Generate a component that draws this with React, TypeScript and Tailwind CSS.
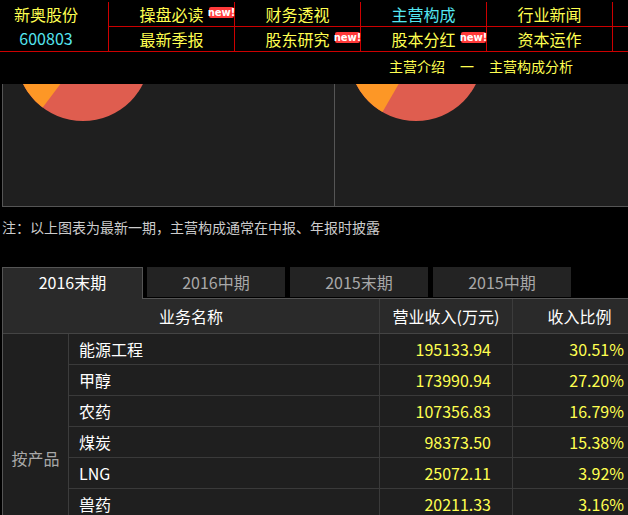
import React from "react";

type NavItem = { label: string; isNew?: boolean; active?: boolean };

const navRows: NavItem[][] = [
  [
    { label: "操盘必读", isNew: true },
    { label: "财务透视" },
    { label: "主营构成", active: true },
    { label: "行业新闻" },
  ],
  [
    { label: "最新季报" },
    { label: "股东研究", isNew: true },
    { label: "股本分红", isNew: true },
    { label: "资本运作" },
  ],
];

const tabs = ["2016末期", "2016中期", "2015末期", "2015中期"];

const rows = [
  { name: "能源工程", income: "195133.94", ratio: "30.51%" },
  { name: "甲醇", income: "173990.94", ratio: "27.20%" },
  { name: "农药", income: "107356.83", ratio: "16.79%" },
  { name: "煤炭", income: "98373.50", ratio: "15.38%" },
  { name: "LNG", income: "25072.11", ratio: "3.92%" },
  { name: "兽药", income: "20211.33", ratio: "3.16%" },
  { name: "二甲醚", income: "11236.52", ratio: "1.76%" },
  { name: "其他", income: "7235.40", ratio: "1.13%" },
];

const NewBadge: React.FC = () => (
  <span className="absolute right-0 top-[5px] flex h-[11px] w-[25px] items-center justify-center rounded-[2px] bg-[#ff3a3a] font-['DejaVu_Sans',sans-serif] text-[10px] font-bold leading-none text-white">
    new!
  </span>
);

const Pie: React.FC<{ cx: number; split: [number, number] }> = ({ cx, split }) => (
  <svg width="331" height="122" viewBox="0 0 331 122" className="block">
    <circle cx={cx} cy={-30} r={67} fill="#df5d4f" />
    <path
      d={`M ${cx} -30 L ${split[0]} ${split[1]} A 67 67 0 0 1 ${cx - 63} -53 Z`}
      fill="#fd9726"
    />
  </svg>
);

const App: React.FC = () => {
  return (
    <div className="h-[515px] w-full overflow-hidden bg-black pt-[2px] font-['Noto_Sans_CJK_SC',sans-serif]">
      {/* top nav */}
      <div className="grid grid-cols-[109px_126px_126px_126px_126px_1fr] grid-rows-[25px_25px]">
        <div className="row-span-2 flex flex-col items-center border-b border-r border-[#cc0000] pr-[16px]">
          <div className="h-[24px] text-[16px] leading-[24px] text-[#ffff50]">新奥股份</div>
          <div className="h-[25px] text-[16px] leading-[25px] text-[#55e6f0]">600803</div>
        </div>
        {navRows.map((row, r) => (
          <React.Fragment key={r}>
            {row.map((item) => (
              <div
                key={item.label}
                className="relative flex items-center justify-center border-b border-r border-[#cc0000]"
              >
                <span
                  className={
                    item.active
                      ? "text-[16px] leading-[24px] text-[#55e6f0]"
                      : "text-[16px] leading-[24px] text-[#ffff50]"
                  }
                >
                  {item.label}
                </span>
                {item.isNew && <NewBadge />}
              </div>
            ))}
            <div className="border-b border-[#cc0000]" />
          </React.Fragment>
        ))}
      </div>

      <div className="flex h-[32px] items-start justify-end gap-[15px] pr-[55px] pt-[7px] text-[14px] leading-[14px] text-[#ffff50]">
        <span>主营介绍</span>
        <span>一</span>
        <span>主营构成分析</span>
      </div>

      {/* pie charts */}
      <div className="ml-[2px] flex h-[123px] w-[660px] border-b border-l border-[#555] bg-[#1f1f1f]">
        <div className="w-[332px] border-r border-[#555]">
          <Pie cx={80} split={[39.7, 23.5]} />
        </div>
        <div className="flex-1">
          <Pie cx={81} split={[47.5, 28]} />
        </div>
      </div>

      <div className="h-[60px] pt-[13px] pl-[2px] text-[14px] leading-[14px] text-[#cccccc]">
        注：以上图表为最新一期，主营构成通常在中报、年报时披露
      </div>

      {/* period tabs */}
      <div className="ml-[2px] flex h-[31px] items-start">
        {tabs.map((t, i) =>
          i === 0 ? (
            <div
              key={t}
              className="relative z-10 -mb-px flex h-[32px] w-[141px] items-center justify-center border border-b-0 border-[#555] bg-[#2a2a2a] pb-[3px] text-[16px] text-white"
            >
              {t}
            </div>
          ) : (
            <div
              key={t}
              className={
                i === 1
                  ? "ml-[4px] flex h-[30px] w-[138px] items-center justify-center bg-[#232323] text-[16px] text-[#a8a8a8]"
                  : "ml-[5px] flex h-[30px] w-[138px] items-center justify-center bg-[#232323] text-[16px] text-[#a8a8a8]"
              }
            >
              {t}
            </div>
          )
        )}
      </div>

      {/* table */}
      <div className="ml-[2px] w-[644px] border-l border-t border-[#555]">
        <div className="flex h-[35px] border-b border-[#444] bg-[#2a2a2a] text-[16px] text-white">
          <div className="flex w-[377px] items-center justify-center border-r border-[#3c3c3c]">业务名称</div>
          <div className="flex w-[133px] items-center justify-center border-r border-[#3c3c3c]">营业收入(万元)</div>
          <div className="flex w-[133px] items-center justify-center">收入比例</div>
        </div>
        <div className="flex bg-[#1f1f1f]">
          <div className="flex w-[66px] items-center justify-center border-r border-[#3c3c3c] text-[16px] text-[#a8a8a8]">
            按产品
          </div>
          <div className="flex-1">
            {rows.map((row) => (
              <div key={row.name} className="flex h-[31px] border-b border-[#3a3a3a] text-[16px]">
                <div className="flex w-[311px] items-center border-r border-[#3a3a3a] pl-[10px] text-white">
                  {row.name}
                </div>
                <div className="flex w-[133px] items-center justify-end border-r border-[#3a3a3a] pr-[21px] text-[#ffff50]">
                  {row.income}
                </div>
                <div className="flex w-[133px] items-center justify-end pr-[22px] text-[#ffff50]">
                  {row.ratio}
                </div>
              </div>
            ))}
          </div>
        </div>
      </div>
    </div>
  );
};

export default App;
